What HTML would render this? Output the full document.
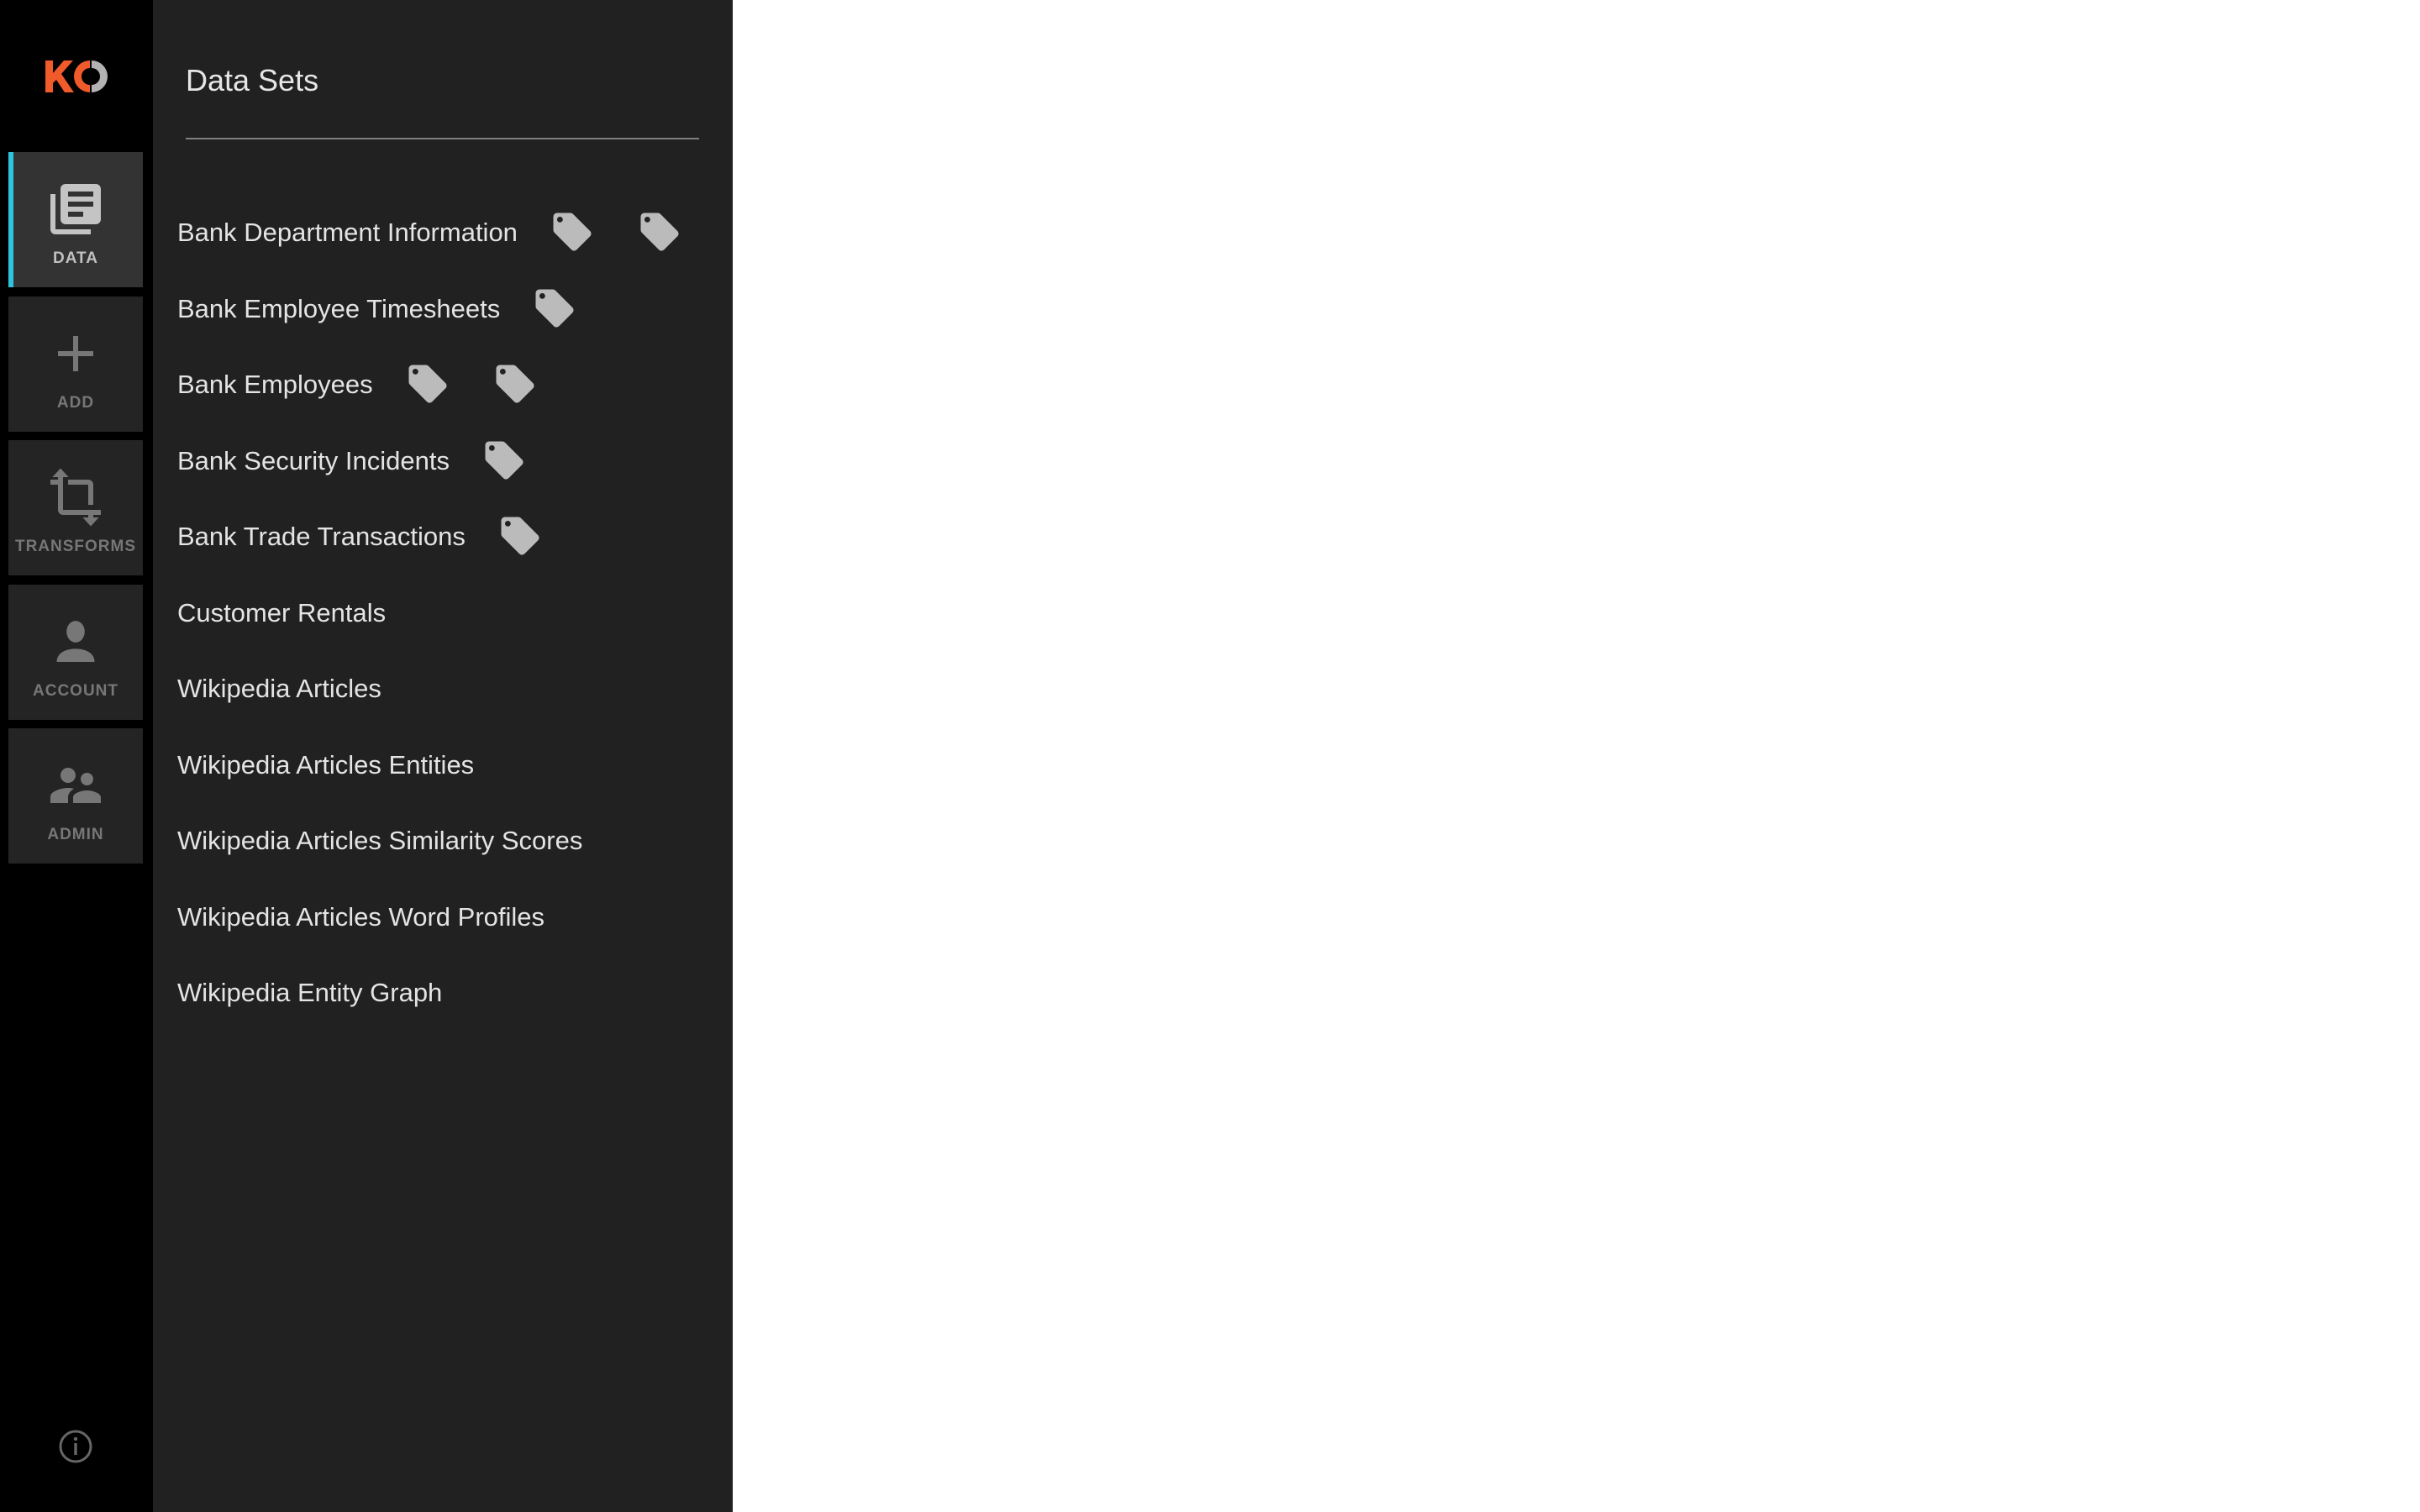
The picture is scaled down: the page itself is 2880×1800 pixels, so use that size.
<!DOCTYPE html>
<html><head><meta charset="utf-8"><style>
*{margin:0;padding:0;box-sizing:border-box}
html,body{width:2880px;height:1800px;overflow:hidden;background:#fff;font-family:"Liberation Sans",sans-serif}
#side{position:absolute;left:0;top:0;width:182px;height:1800px;background:#000}
#panel{position:absolute;left:182px;top:0;width:690px;height:1800px;background:#212121}
.nav{position:absolute;left:10px;width:160px;height:161px;background:#242424}
.nav.act{background:#333}
.nav.act::before{content:"";position:absolute;left:0;top:0;width:6px;height:100%;background:#2ec4e0}
.nav svg{position:absolute;left:44px;top:32px;width:72px;height:72px;fill:#777}
.nav.act svg{fill:#c4c4c4}
.nav .lb{position:absolute;left:0;width:160px;text-align:center;top:117px;font-size:19px;line-height:19px;font-weight:bold;color:#777;letter-spacing:1px}
.nav.act .lb{color:#c0c0c0}
.title{position:absolute;left:221px;top:78px;font-size:36px;line-height:36px;color:#e6e6e6}
.div{position:absolute;left:221px;top:164px;width:611px;height:2px;background:#808080}
.row{position:absolute;left:211px;font-size:31px;line-height:33px;color:#e4e4e4;white-space:nowrap;display:flex;align-items:center}
.tag{width:54px;height:54px;fill:#bbb;margin-left:38px;flex:none}
.tag+.tag{margin-left:50px}
</style></head><body>
<div id="side">
<svg style="position:absolute;left:52px;top:70px" width="76" height="42" viewBox="0 0 76 42">
<path d="M2 2h9v15l13-15h11L21 18l15 22H25L15 25l-4 4v11H2z" fill="#f15a2b"/>
<path d="M55 2a19 19 0 0 0 0 38v-9a10 10 0 0 1 0-20z" fill="#f15a2b"/>
<path d="M57 2a19 19 0 0 1 0 38v-9a10 10 0 0 0 0-20z" fill="#b3b3b3"/>
</svg>
<div class="nav act" style="top:181px"><svg viewBox="0 0 24 24"><path d="M4 6H2v14c0 1.1.9 2 2 2h14v-2H4V6zm16-4H8c-1.1 0-2 .9-2 2v12c0 1.1.9 2 2 2h12c1.1 0 2-.9 2-2V4c0-1.1-.9-2-2-2zm-1 9H9V9h10v2zm-4 4H9v-2h6v2zm4-8H9V5h10v2z"/></svg><div class="lb">DATA</div></div>
<div class="nav" style="top:353px"><svg viewBox="0 0 24 24"><path d="M19 13h-6v6h-2v-6H5v-2h6V5h2v6h6v2z"/></svg><div class="lb">ADD</div></div>
<div class="nav" style="top:524px"><svg viewBox="0 0 24 24"><path d="M17 15h2V7c0-1.1-.9-2-2-2H9v2h8v8zM7 17V3.5H5V5H2v2h3v10c0 1.1.9 2 2 2h10v2.5h2V19h3v-2z"/><path d="M6 .5L2.8 4h6.4zM18 23.5l3.2-3.5h-6.4z"/></svg><div class="lb">TRANSFORMS</div></div>
<div class="nav" style="top:696px"><svg viewBox="0 0 24 24"><ellipse cx="12" cy="8" rx="3.6" ry="4.3"/><path d="M4.5 20c0-3.5 3.5-5.2 7.5-5.2s7.5 1.7 7.5 5.2z"/></svg><div class="lb">ACCOUNT</div></div>
<div class="nav" style="top:867px"><svg viewBox="0 0 24 24"><path d="M16.5 12c1.38 0 2.49-1.120 2.49-2.5S17.88 7 16.5 7C15.12 7 14 8.12 14 9.5s1.12 2.5 2.5 2.5zM9 11c1.66 0 2.99-1.34 2.99-3S10.66 5 9 5C7.34 5 6 6.34 6 8s1.34 3 3 3zm7.5 3c-1.83 0-5.5.92-5.5 2.75V19h11v-2.25c0-1.83-3.67-2.75-5.5-2.750zM9 13c-2.33 0-7 1.17-7 3.5V19h7v-2.25c0-.85.33-2.34 2.37-3.47C10.5 13.1 9.66 13 9 13z"/></svg><div class="lb">ADMIN</div></div>
<svg style="position:absolute;left:68px;top:1700px" width="44" height="44" viewBox="0 0 44 44"><circle cx="22" cy="22" r="18" fill="none" stroke="#666" stroke-width="3"/><rect x="20.3" y="18" width="3.4" height="14" fill="#666"/><circle cx="22" cy="13" r="2.2" fill="#666"/></svg>
</div>
<div id="panel"></div>
<div class="title">Data Sets</div>
<div class="div"></div>
<svg width="0" height="0" style="position:absolute"><defs><symbol id="t" viewBox="0 0 24 24"><path d="M21.41 11.58l-9-9C12.05 2.22 11.55 2 11 2H4c-1.1 0-2 .9-2 2v7c0 .55.22 1.05.59 1.420l9 9c.36.36.86.58 1.41.58.55 0 1.05-.22 1.41-.59l7-7c.37-.36.59-.86.59-1.41 0-.55-.23-1.06-.59-1.42zM5.5 7C4.67 7 4 6.33 4 5.5S4.67 4 5.5 4 7 4.67 7 5.5 6.33 7 5.5 7z"/></symbol></defs></svg>
<div class="row" style="top:249px;height:54px">Bank Department Information<svg class="tag"><use href="#t"/></svg><svg class="tag"><use href="#t"/></svg></div>
<div class="row" style="top:340px;height:54px">Bank Employee Timesheets<svg class="tag"><use href="#t"/></svg></div>
<div class="row" style="top:430px;height:54px">Bank Employees<svg class="tag"><use href="#t"/></svg><svg class="tag"><use href="#t"/></svg></div>
<div class="row" style="top:521px;height:54px">Bank Security Incidents<svg class="tag"><use href="#t"/></svg></div>
<div class="row" style="top:611px;height:54px">Bank Trade Transactions<svg class="tag"><use href="#t"/></svg></div>
<div class="row" style="top:702px;height:54px">Customer Rentals</div>
<div class="row" style="top:792px;height:54px">Wikipedia Articles</div>
<div class="row" style="top:883px;height:54px">Wikipedia Articles Entities</div>
<div class="row" style="top:973px;height:54px">Wikipedia Articles Similarity Scores</div>
<div class="row" style="top:1064px;height:54px">Wikipedia Articles Word Profiles</div>
<div class="row" style="top:1154px;height:54px">Wikipedia Entity Graph</div>
</body></html>
